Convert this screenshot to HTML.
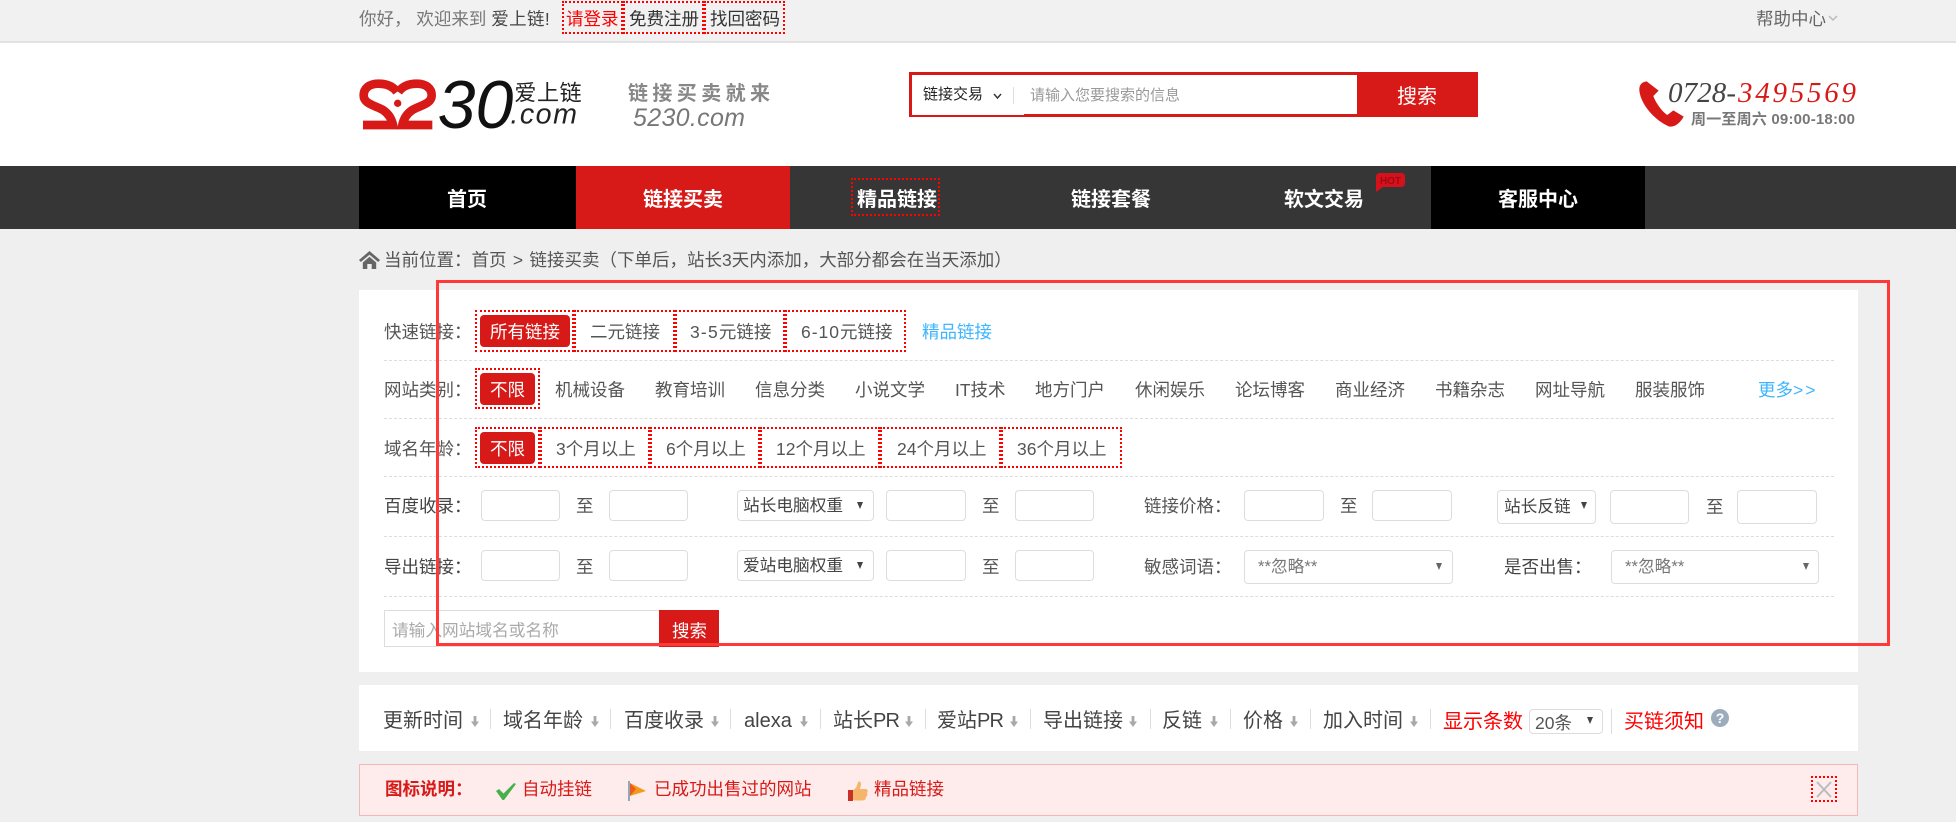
<!DOCTYPE html>
<html lang="zh-CN">
<head>
<meta charset="utf-8">
<title>爱上链</title>
<style>
html,body{margin:0;padding:0;background:#efefef;}
body{position:relative;width:1956px;height:822px;overflow:hidden;font-family:"Liberation Sans","Noto Sans CJK SC",sans-serif;font-size:17.5px;color:#555;}
.b{position:absolute;box-sizing:border-box;}
.t{position:absolute;white-space:nowrap;line-height:30px;height:30px;}
.d{position:absolute;box-sizing:border-box;border:2px dotted #f00;}
.l{position:absolute;left:384px;width:1450px;height:0;border-top:1px dashed #ddd;}
.p{position:absolute;background:#d71a18;border-radius:4px;}
.i{position:absolute;box-sizing:border-box;background:#fff;border:1px solid #ddd;border-radius:4px;height:31px;}
.s{position:absolute;box-sizing:border-box;background:#fff;border:1px solid #ddd;border-radius:4px;}
.ar{position:absolute;width:0;height:0;border-left:3.5px solid transparent;border-right:3.5px solid transparent;border-top:7px solid #444;}
.n{position:absolute;top:166px;height:63px;line-height:68px;text-align:center;color:#fff;font-weight:700;font-size:20px;width:214px;}
.z{font-size:20px;color:#444;}
.v{position:absolute;top:709px;height:20px;width:1px;background:#ddd;}
.da{position:absolute;top:716px;}
svg{position:absolute;display:block;overflow:visible;}
</style>
</head>
<body>
<!-- top bar -->
<div class="b" style="left:0;top:0;width:1956px;height:43px;background:#f1f1f1;border-bottom:2px solid #e2e2e2;"></div>
<div class="t" style="left:359px;top:4px;color:#777;">你好， 欢迎来到 <span style="color:#444;letter-spacing:.4px;">爱上链!</span></div>
<div class="d" style="left:562px;top:1px;width:61px;height:33px;"></div>
<div class="d" style="left:623px;top:1px;width:81px;height:33px;"></div>
<div class="d" style="left:704px;top:1px;width:81px;height:33px;"></div>
<div class="t" style="left:566px;top:4px;color:#f00;">请登录</div>
<div class="t" style="left:629px;top:4px;color:#333;">免费注册</div>
<div class="t" style="left:710px;top:4px;color:#333;">找回密码</div>
<div class="t" style="left:1756px;top:4px;color:#666;">帮助中心</div>
<svg style="left:1828px;top:15px" width="10" height="6" viewBox="0 0 10 6"><path d="M1 1 L5 5 L9 1" fill="none" stroke="#bbb" stroke-width="1.5"/></svg>

<!-- header -->
<div class="b" style="left:0;top:43px;width:1956px;height:123px;background:#fff;"></div>
<svg style="left:355px;top:70px" width="240" height="70" viewBox="0 0 720 210">
<path d="M126 66 C112 46 92 41 70 41 C42 41 26 56 26 76 C26 102 60 106 84 120 C102 132 110 146 114 165 L24 165" fill="none" stroke="#d71a18" stroke-width="26"/>
<path d="M130 66 C144 46 164 41 186 41 C214 41 230 56 230 76 C230 102 196 106 172 120 C154 132 146 146 142 165 L232 165" fill="none" stroke="#d71a18" stroke-width="26"/>
<circle cx="128" cy="100" r="11" fill="#d71a18"/>
<text x="248" y="174" font-size="204" font-style="italic" fill="#111" font-family="Liberation Sans">30</text>
<text x="478" y="92" font-size="66" fill="#222" font-family="Noto Sans CJK SC" textLength="202">爱上链</text>
<text x="466" y="160" font-size="86" font-style="italic" fill="#222" font-family="Liberation Sans" textLength="200">.com</text>
</svg>
<svg style="left:620px;top:75px" width="170" height="60" viewBox="0 0 170 60">
<text x="8" y="25" font-size="20" font-weight="700" fill="#888" font-family="Noto Sans CJK SC" textLength="142">链接买卖就来</text>
<text x="13" y="51" font-size="25" font-style="italic" fill="#777" font-family="Liberation Sans" textLength="112">5230.com</text>
</svg>

<!-- header search -->
<div class="b" style="left:909px;top:72px;width:569px;height:45px;background:#d71a18;"></div>
<div class="b" style="left:912px;top:75px;width:445px;height:39px;background:#fff;"></div>
<div class="b" style="left:912px;top:75px;width:112px;height:40px;background:#fff;"></div>
<div class="t" style="left:923px;top:80px;font-size:15px;color:#222;">链接交易</div>
<svg style="left:993px;top:93px" width="9" height="6" viewBox="0 0 9 6"><path d="M1 1 L4.5 5 L8 1" fill="none" stroke="#333" stroke-width="1.4"/></svg>
<div class="b" style="left:1013px;top:87px;width:1px;height:17px;background:#ddd;"></div>
<div class="t" style="left:1030px;top:81px;font-size:15px;color:#999;">请输入您要搜索的信息</div>
<div class="t" style="left:1397px;top:82px;font-size:20px;color:#fff;">搜索</div>

<!-- phone -->
<svg style="left:1630px;top:70px" width="240" height="70" viewBox="0 0 720 210">
<path d="M50 34 C34 36 27 46 28 62 C32 102 72 150 116 169 C132 174 150 160 161 140 L130 121 L112 135 C95 124 76 96 70 78 L86 62 Z" fill="#d71a18"/>
</svg>
<svg style="left:1660px;top:75px" width="210" height="55" viewBox="0 0 210 55">
<text x="8" y="27" font-size="29" font-style="italic" fill="#444" font-family="Liberation Serif" textLength="68">0728-</text>
<text x="78" y="27" font-size="29" font-style="italic" fill="#d71a18" font-family="Liberation Serif" textLength="118">3495569</text>
<text x="31" y="49" font-size="15" fill="#777" font-weight="700" font-family="Liberation Sans, Noto Sans CJK SC" textLength="164">周一至周六 09:00-18:00</text>
</svg>

<!-- nav -->
<div class="b" style="left:0;top:166px;width:1956px;height:63px;background:#363636;"></div>
<div class="b" style="left:359px;top:166px;width:217px;height:63px;background:#000;"></div>
<div class="b" style="left:576px;top:166px;width:214px;height:63px;background:#d71a18;"></div>
<div class="b" style="left:1431px;top:166px;width:214px;height:63px;background:#000;"></div>
<div class="n" style="left:360px;">首页</div>
<div class="n" style="left:576px;">链接买卖</div>
<div class="n" style="left:790px;">精品链接</div>
<div class="n" style="left:1004px;">链接套餐</div>
<div class="n" style="left:1217px;">软文交易</div>
<div class="n" style="left:1431px;">客服中心</div>
<div class="d" style="left:851px;top:178px;width:89px;height:38px;"></div>
<svg style="left:1376px;top:173px" width="30" height="20" viewBox="0 0 30 20"><path d="M4 0 H25 Q29 0 29 4 V10 Q29 14 25 14 H7 L0 19 V4 Q0 0 4 0 Z" fill="#d5111c"/><text x="14.5" y="11" font-size="10" font-weight="700" fill="#a00812" text-anchor="middle" font-family="Liberation Sans">HOT</text></svg>

<!-- breadcrumb -->
<svg style="left:359px;top:251px" width="21" height="18" viewBox="0 0 21 18"><path d="M10.5 0 L0 9 L1.8 11 L10.5 3.8 L19.2 11 L21 9 Z" fill="#666"/><path d="M3.8 11.5 L10.5 5.8 L17.2 11.5 V18 H12.7 V13 H8.3 V18 H3.8 Z" fill="#666"/></svg>
<div class="t" style="left:384px;top:245px;">当前位置：首页 <span style="padding:0 1.5px;">&gt;</span> 链接买卖（下单后，站长3天内添加，大部分都会在当天添加）</div>

<!-- filter panel -->
<div class="b" style="left:359px;top:290px;width:1499px;height:382px;background:#fff;"></div>

<!-- row 1 -->
<div class="t" style="left:384px;top:317px;">快速链接：</div>
<div class="d" style="left:475px;top:310px;width:99px;height:42px;"></div>
<div class="d" style="left:574px;top:310px;width:101px;height:42px;"></div>
<div class="d" style="left:675px;top:310px;width:110px;height:42px;"></div>
<div class="d" style="left:785px;top:310px;width:121px;height:42px;"></div>
<div class="p" style="left:480px;top:315px;width:90px;height:32px;"></div>
<div class="t" style="left:490px;top:317px;color:#fff;">所有链接</div>
<div class="t" style="left:590px;top:317px;">二元链接</div>
<div class="t" style="left:690px;top:317px;"><span style="letter-spacing:1.2px;">3-5</span>元链接</div>
<div class="t" style="left:801px;top:317px;"><span style="letter-spacing:1px;">6-10</span>元链接</div>
<div class="t" style="left:922px;top:317px;color:#3db5ff;">精品链接</div>
<div class="l" style="top:360px;"></div>

<!-- row 2 -->
<div class="t" style="left:384px;top:375px;">网站类别：</div>
<div class="d" style="left:475px;top:368px;width:65px;height:41px;"></div>
<div class="p" style="left:480px;top:373px;width:55px;height:32px;"></div>
<div class="t" style="left:490px;top:375px;color:#fff;">不限</div>
<div class="t" style="left:555px;top:375px;">机械设备</div>
<div class="t" style="left:655px;top:375px;">教育培训</div>
<div class="t" style="left:755px;top:375px;">信息分类</div>
<div class="t" style="left:855px;top:375px;">小说文学</div>
<div class="t" style="left:955px;top:375px;">IT技术</div>
<div class="t" style="left:1035px;top:375px;">地方门户</div>
<div class="t" style="left:1135px;top:375px;">休闲娱乐</div>
<div class="t" style="left:1235px;top:375px;">论坛博客</div>
<div class="t" style="left:1335px;top:375px;">商业经济</div>
<div class="t" style="left:1435px;top:375px;">书籍杂志</div>
<div class="t" style="left:1535px;top:375px;">网址导航</div>
<div class="t" style="left:1635px;top:375px;">服装服饰</div>
<div class="t" style="left:1758px;top:375px;color:#3db5ff;">更多<span style="letter-spacing:2px;">&gt;&gt;</span></div>
<div class="l" style="top:418px;"></div>

<!-- row 3 -->
<div class="t" style="left:384px;top:434px;">域名年龄：</div>
<div class="d" style="left:475px;top:427px;width:65px;height:41px;"></div>
<div class="d" style="left:540px;top:427px;width:110px;height:41px;"></div>
<div class="d" style="left:650px;top:427px;width:110px;height:41px;"></div>
<div class="d" style="left:760px;top:427px;width:120px;height:41px;"></div>
<div class="d" style="left:880px;top:427px;width:121px;height:41px;"></div>
<div class="d" style="left:1001px;top:427px;width:121px;height:41px;"></div>
<div class="p" style="left:480px;top:432px;width:55px;height:32px;"></div>
<div class="t" style="left:490px;top:434px;color:#fff;">不限</div>
<div class="t" style="left:556px;top:434px;">3个月以上</div>
<div class="t" style="left:666px;top:434px;">6个月以上</div>
<div class="t" style="left:776px;top:434px;">12个月以上</div>
<div class="t" style="left:897px;top:434px;">24个月以上</div>
<div class="t" style="left:1017px;top:434px;">36个月以上</div>
<div class="l" style="top:476px;"></div>

<!-- row 4 -->
<div class="t" style="left:384px;top:491px;color:#444;">百度收录：</div>
<div class="i" style="left:481px;top:490px;width:79px;"></div>
<div class="t" style="left:576px;top:491px;">至</div>
<div class="i" style="left:609px;top:490px;width:79px;"></div>
<div class="s" style="left:737px;top:490px;width:137px;height:31px;"></div>
<div class="t" style="left:743px;top:491px;font-size:16.7px;color:#444;">站长电脑权重</div>
<div class="ar" style="left:857px;top:502px;"></div>
<div class="i" style="left:886px;top:490px;width:80px;"></div>
<div class="t" style="left:982px;top:491px;">至</div>
<div class="i" style="left:1015px;top:490px;width:79px;"></div>
<div class="t" style="left:1144px;top:491px;">链接价格：</div>
<div class="i" style="left:1244px;top:490px;width:80px;"></div>
<div class="t" style="left:1340px;top:491px;">至</div>
<div class="i" style="left:1372px;top:490px;width:80px;"></div>
<div class="s" style="left:1497px;top:490px;width:99px;height:34px;"></div>
<div class="t" style="left:1504px;top:492px;font-size:16.7px;color:#444;">站长反链</div>
<div class="ar" style="left:1581px;top:502px;"></div>
<div class="i" style="left:1610px;top:490px;width:79px;height:34px;"></div>
<div class="t" style="left:1706px;top:492px;">至</div>
<div class="i" style="left:1737px;top:490px;width:80px;height:34px;"></div>
<div class="l" style="top:536px;"></div>

<!-- row 5 -->
<div class="t" style="left:384px;top:552px;color:#444;">导出链接：</div>
<div class="i" style="left:481px;top:550px;width:79px;"></div>
<div class="t" style="left:576px;top:552px;">至</div>
<div class="i" style="left:609px;top:550px;width:79px;"></div>
<div class="s" style="left:737px;top:550px;width:137px;height:31px;"></div>
<div class="t" style="left:743px;top:551px;font-size:16.7px;color:#444;">爱站电脑权重</div>
<div class="ar" style="left:857px;top:562px;"></div>
<div class="i" style="left:886px;top:550px;width:80px;"></div>
<div class="t" style="left:982px;top:552px;">至</div>
<div class="i" style="left:1015px;top:550px;width:79px;"></div>
<div class="t" style="left:1144px;top:552px;">敏感词语：</div>
<div class="s" style="left:1244px;top:550px;width:209px;height:34px;"></div>
<div class="t" style="left:1258px;top:552px;font-size:16.7px;color:#777;">**忽略**</div>
<div class="ar" style="left:1436px;top:563px;border-top-color:#666;"></div>
<div class="t" style="left:1504px;top:552px;color:#444;">是否出售：</div>
<div class="s" style="left:1611px;top:550px;width:208px;height:34px;"></div>
<div class="t" style="left:1625px;top:552px;font-size:16.7px;color:#777;">**忽略**</div>
<div class="ar" style="left:1803px;top:563px;border-top-color:#666;"></div>
<div class="l" style="top:596px;"></div>

<!-- row 6 -->
<div class="b" style="left:384px;top:610px;width:276px;height:37px;background:#fff;border:1px solid #ddd;"></div>
<div class="t" style="left:392px;top:616px;font-size:16.7px;color:#aaa;">请输入网站域名或名称</div>
<div class="b" style="left:659px;top:610px;width:60px;height:37px;background:#d71a18;"></div>
<div class="t" style="left:672px;top:616px;color:#fff;">搜索</div>

<!-- sort panel -->
<div class="b" style="left:359px;top:685px;width:1499px;height:66px;background:#fff;"></div>
<div class="t z" style="left:383px;top:706px;">更新时间</div>
<svg class="da" style="left:471px" width="8" height="11" viewBox="0 0 8 11"><path d="M2.6 0 H5.4 V5.5 H8 L4 11 L0 5.5 H2.6 Z" fill="#a8a8a8"/></svg>
<div class="v" style="left:490px;"></div>
<div class="t z" style="left:503px;top:706px;">域名年龄</div>
<svg class="da" style="left:591px" width="8" height="11" viewBox="0 0 8 11"><path d="M2.6 0 H5.4 V5.5 H8 L4 11 L0 5.5 H2.6 Z" fill="#a8a8a8"/></svg>
<div class="v" style="left:610px;"></div>
<div class="t z" style="left:624px;top:706px;">百度收录</div>
<svg class="da" style="left:711px" width="8" height="11" viewBox="0 0 8 11"><path d="M2.6 0 H5.4 V5.5 H8 L4 11 L0 5.5 H2.6 Z" fill="#a8a8a8"/></svg>
<div class="v" style="left:730px;"></div>
<div class="t z" style="left:744px;top:706px;">alexa</div>
<svg class="da" style="left:800px" width="8" height="11" viewBox="0 0 8 11"><path d="M2.6 0 H5.4 V5.5 H8 L4 11 L0 5.5 H2.6 Z" fill="#a8a8a8"/></svg>
<div class="v" style="left:820px;"></div>
<div class="t z" style="left:833px;top:706px;">站长<span style="letter-spacing:-.8px;">PR</span></div>
<svg class="da" style="left:905px" width="8" height="11" viewBox="0 0 8 11"><path d="M2.6 0 H5.4 V5.5 H8 L4 11 L0 5.5 H2.6 Z" fill="#a8a8a8"/></svg>
<div class="v" style="left:925px;"></div>
<div class="t z" style="left:937px;top:706px;">爱站<span style="letter-spacing:-.8px;">PR</span></div>
<svg class="da" style="left:1010px" width="8" height="11" viewBox="0 0 8 11"><path d="M2.6 0 H5.4 V5.5 H8 L4 11 L0 5.5 H2.6 Z" fill="#a8a8a8"/></svg>
<div class="v" style="left:1030px;"></div>
<div class="t z" style="left:1043px;top:706px;">导出链接</div>
<svg class="da" style="left:1129px" width="8" height="11" viewBox="0 0 8 11"><path d="M2.6 0 H5.4 V5.5 H8 L4 11 L0 5.5 H2.6 Z" fill="#a8a8a8"/></svg>
<div class="v" style="left:1150px;"></div>
<div class="t z" style="left:1162px;top:706px;">反链</div>
<svg class="da" style="left:1210px" width="8" height="11" viewBox="0 0 8 11"><path d="M2.6 0 H5.4 V5.5 H8 L4 11 L0 5.5 H2.6 Z" fill="#a8a8a8"/></svg>
<div class="v" style="left:1230px;"></div>
<div class="t z" style="left:1243px;top:706px;">价格</div>
<svg class="da" style="left:1290px" width="8" height="11" viewBox="0 0 8 11"><path d="M2.6 0 H5.4 V5.5 H8 L4 11 L0 5.5 H2.6 Z" fill="#a8a8a8"/></svg>
<div class="v" style="left:1310px;"></div>
<div class="t z" style="left:1323px;top:706px;">加入时间</div>
<svg class="da" style="left:1410px" width="8" height="11" viewBox="0 0 8 11"><path d="M2.6 0 H5.4 V5.5 H8 L4 11 L0 5.5 H2.6 Z" fill="#a8a8a8"/></svg>
<div class="v" style="left:1430px;"></div>
<div class="t z" style="left:1443px;top:707px;color:#f00;">显示条数</div>
<div class="s" style="left:1529px;top:709px;width:74px;height:25px;"></div>
<div class="t" style="left:1535px;top:708px;color:#555;">20条</div>
<div class="ar" style="left:1587px;top:717px;"></div>
<div class="v" style="left:1611px;top:709px;height:25px;"></div>
<div class="t z" style="left:1624px;top:707px;color:#f00;">买链须知</div>
<svg style="left:1711px;top:709px" width="18" height="18" viewBox="0 0 18 18"><circle cx="9" cy="9" r="9" fill="#9badbd"/><text x="9" y="14" font-size="14" font-weight="700" fill="#fff" text-anchor="middle" font-family="Liberation Sans">?</text></svg>

<!-- legend -->
<div class="b" style="left:359px;top:764px;width:1499px;height:52px;background:#feecec;border:1px solid #f5b8b8;"></div>
<div class="t" style="left:385px;top:774px;color:#d71a18;font-weight:700;">图标说明：</div>
<svg style="left:496px;top:783px" width="20" height="17" viewBox="0 0 20 17"><path d="M0 8 L3 6 L7.5 10.5 L18 0 L20 1 L8 17 L6.5 17 Z" fill="#47b04b"/></svg>
<div class="t" style="left:522px;top:774px;color:#d71a18;">自动挂链</div>
<svg style="left:628px;top:781px" width="19" height="20" viewBox="0 0 19 20"><rect x="0" y="0" width="2" height="20" fill="#8fa9bb"/><path d="M2 2 L18 10 L2 15 Z" fill="#f49a1c"/><path d="M2 2 L8 8 L2 15 Z" fill="#ee5b1e"/></svg>
<div class="t" style="left:654px;top:774px;color:#d71a18;">已成功出售过的网站</div>
<svg style="left:848px;top:781px" width="20" height="20" viewBox="0 0 20 20"><rect x="0" y="9" width="5" height="11" fill="#c8302a"/><path d="M5 9 C8 8 9 5 10 1 C10 0 13 0 13 3 C13 5 12 7 12 8 H18 C20 8 20 11 19 12 C20 14 19 15 18 16 C18 18 17 19 15 19.5 H8 C6 19.5 5 19 5 18 Z" fill="#f5b56b"/></svg>
<div class="t" style="left:874px;top:774px;color:#d71a18;">精品链接</div>
<div class="d" style="left:1811px;top:776px;width:26px;height:26px;"></div>
<svg style="left:1815px;top:781px" width="18" height="17" viewBox="0 0 18 17"><path d="M2 1 L16 16 M16 1 L2 16" stroke="#bbb" stroke-width="2" fill="none"/></svg>

<!-- annotation rectangle -->
<div class="b" style="left:436px;top:280px;width:1454px;height:366px;border:3px solid #ff3838;"></div>
</body>
</html>
